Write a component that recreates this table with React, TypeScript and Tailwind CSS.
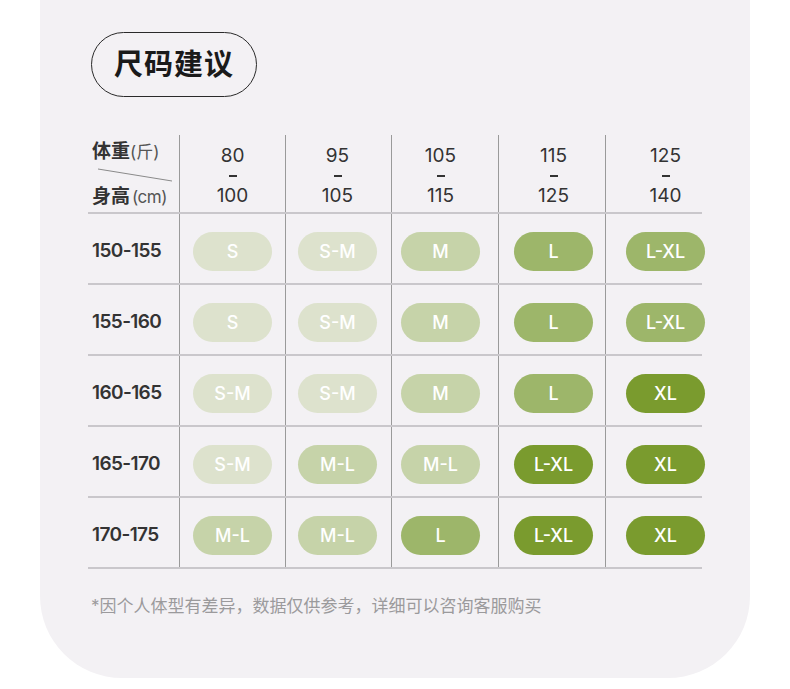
import React from "react";

const C1 = "bg-[#dde2cd]";
const C2 = "bg-[#c6d3a9]";
const C3 = "bg-[#9db66a]";
const C4 = "bg-[#7a9b2e]";

const colMeta = [
  { w: "w-[106px]", off: "pl-[13px]" },
  { w: "w-[106px]", off: "pl-[12px]" },
  { w: "w-[107px]", off: "pl-[9px]" },
  { w: "w-[107px]", off: "pl-[15px]" },
  { w: "w-[97px]", off: "pl-[20px]" },
];

const header = [
  ["80", "100"],
  ["95", "105"],
  ["105", "115"],
  ["115", "125"],
  ["125", "140"],
];

const rows: { label: string; cells: [string, string][] }[] = [
  { label: "150-155", cells: [["S", C1], ["S-M", C1], ["M", C2], ["L", C3], ["L-XL", C3]] },
  { label: "155-160", cells: [["S", C1], ["S-M", C1], ["M", C2], ["L", C3], ["L-XL", C3]] },
  { label: "160-165", cells: [["S-M", C1], ["S-M", C1], ["M", C2], ["L", C3], ["XL", C4]] },
  { label: "165-170", cells: [["S-M", C1], ["M-L", C2], ["M-L", C2], ["L-XL", C4], ["XL", C4]] },
  { label: "170-175", cells: [["M-L", C2], ["M-L", C2], ["L", C3], ["L-XL", C4], ["XL", C4]] },
];

const font = { fontFamily: 'Inter, "Noto Sans CJK SC", sans-serif' };

export default function App() {
  return (
    <div className="w-[790px] h-[689px] bg-white overflow-hidden" style={font}>
      <div className="ml-[40px] w-[710px] h-[678px] bg-[#f3f1f4] rounded-b-[82px] pl-[48px] pt-[32px]">
        <div className="ml-[3px] w-[166px] h-[65px] rounded-full border-[1.5px] border-[#2a2a2a] flex items-center justify-center">
          <span className="text-[29px] font-semibold text-[#1a1a1a] tracking-[1px] leading-none">尺码建议</span>
        </div>

        <div className="mt-[38px] w-[614px]">
          {/* header */}
          <div className="flex h-[79px] border-b-2 border-[#c9c7cb]">
            <div className="w-[91px] relative">
              <div className="absolute left-[4px] top-[7px] flex items-baseline">
                <span className="text-[19px] font-semibold text-[#333] leading-none">体重</span>
                <span className="text-[17px] text-[#555] leading-none">(斤)</span>
              </div>
              <svg className="absolute left-0 top-0" width="91" height="79">
                <line x1="10" y1="34" x2="84" y2="46" stroke="#8a8a8a" strokeWidth="1" />
              </svg>
              <div className="absolute left-[4px] top-[52px] flex items-baseline">
                <span className="text-[19px] font-semibold text-[#333] leading-none">身高</span>
                <span className="text-[17px] text-[#555] leading-none ml-[2px] tracking-[-0.5px]">(cm)</span>
              </div>
            </div>
            {header.map((h, i) => (
              <div key={i} className={`${colMeta[i].w} ${colMeta[i].off} border-l border-[#9a9a9a]`}>
                <div className="w-[79px] flex flex-col items-center pt-[11px] text-[19px] text-[#333] leading-[20px]">
                  <span>{h[0]}</span>
                  <span className="block w-[8px] h-[2px] bg-[#333] my-[9px]"></span>
                  <span>{h[1]}</span>
                </div>
              </div>
            ))}
          </div>
          {/* body */}
          {rows.map((r, ri) => (
            <div key={ri} className="flex h-[71px] border-b-2 border-[#c9c7cb]">
              <div className="w-[91px] flex items-center pl-[4px] pt-[3px]">
                <span className="text-[19px] font-semibold text-[#333] leading-none tracking-[-0.6px]">{r.label}</span>
              </div>
              {r.cells.map((c, ci) => (
                <div key={ci} className={`${colMeta[ci].w} ${colMeta[ci].off} border-l border-[#9a9a9a] flex items-center pt-[6px]`}>
                  <div className={`w-[79px] h-[39px] shrink-0 rounded-full ${c[1]} flex items-center justify-center text-white text-[18px] font-medium leading-none`}>
                    {c[0]}
                  </div>
                </div>
              ))}
            </div>
          ))}
        </div>

        <div className="mt-[29px] ml-[3px] text-[17px] text-[#9b9a9c] leading-none">
          *因个人体型有差异，数据仅供参考，详细可以咨询客服购买
        </div>
      </div>
    </div>
  );
}
